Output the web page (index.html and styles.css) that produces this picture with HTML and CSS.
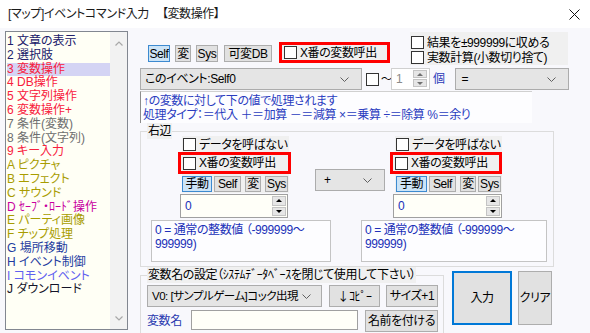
FILE: index.html
```html
<!DOCTYPE html>
<html lang="ja">
<head>
    <meta charset="UTF-8">
    <meta name="viewport" content="width=device-width, initial-scale=1.0">
    <title>[マップ]イベントコマンド入力 【変数操作】</title>
    <link rel="stylesheet" href="styles.css">
</head>
<body>
    <div class="titlebar">
        <span class="title">[マップ]イベントコマンド入力</span>
        <span class="title-sub">【変数操作】</span>
        <span class="close">
            <svg width="11" height="11" viewBox="0 0 11 11"><path d="M0.5 0.5L10.5 10.5M10.5 0.5L0.5 10.5" stroke="#111" stroke-width="1"/></svg>
        </span>
    </div>
    <div class="dialog">
        <div class="cmd-list">
            <ul class="cmd-items">
                <li class="c-navy">1 文章の表示</li>
                <li class="c-navy">2 選択肢</li>
                <li class="c-red current">3 変数操作</li>
                <li class="c-red">4 DB操作</li>
                <li class="c-red">5 文字列操作</li>
                <li class="c-red">6 変数操作+</li>
                <li class="c-gray">7 条件(変数)</li>
                <li class="c-gray">8 条件(文字列)</li>
                <li class="c-red">9 キー入力</li>
                <li class="c-olive">A ピクチャ</li>
                <li class="c-olive">B エフェクト</li>
                <li class="c-olive">C サウンド</li>
                <li class="c-magenta">D ｾｰﾌﾞ・ﾛｰﾄﾞ操作</li>
                <li class="c-olive">E パーティ画像</li>
                <li class="c-olive">F チップ処理</li>
                <li class="c-blue">G 場所移動</li>
                <li class="c-blue">H イベント制御</li>
                <li class="c-violet">I コモンイベント</li>
                <li class="c-dark">J ダウンロード</li>
            </ul>
            <div class="scrollbar">
                <svg width="8" height="5" viewBox="0 0 8 5"><path d="M0.5 4.5L4 1L7.5 4.5" fill="none" stroke="#a8a8a8" stroke-width="1.2"/></svg>
                <svg width="8" height="5" viewBox="0 0 8 5"><path d="M0.5 0.5L4 4L7.5 0.5" fill="none" stroke="#a8a8a8" stroke-width="1.2"/></svg>
            </div>
        </div>

        <div class="main">
            <div class="row-top">
                <div class="tool-buttons">
                    <button class="btn sel w-self">Self</button>
                    <button class="btn w-hen">変</button>
                    <button class="btn w-sys">Sys</button>
                    <button class="btn w-db">可変DB</button>
                </div>
                <label class="red-box top-red"><span class="check"></span>X番の変数呼出</label>
                <div class="opt-panel">
                    <label class="opt"><span class="check"></span>結果を±999999に収める</label>
                    <label class="opt"><span class="check"></span>実数計算(小数切り捨て)</label>
                </div>
            </div>

            <div class="row-target">
                <div class="combo target-combo">
                    <span>このイベント:Self0</span>
                    <svg width="9" height="5" viewBox="0 0 9 5"><path d="M0.5 0.5L4.5 4.5L8.5 0.5" fill="none" stroke="#606060"/></svg>
                </div>
                <span class="check range-check"></span>
                <span class="tilde">～</span>
                <div class="spin spin-off">
                    <span class="spin-val">1</span>
                    <div class="spin-btns"><span class="up"></span><span class="down"></span></div>
                </div>
                <span class="unit">個</span>
                <div class="combo op-combo">
                    <span>=</span>
                    <svg width="9" height="5" viewBox="0 0 9 5"><path d="M0.5 0.5L4.5 4.5L8.5 0.5" fill="none" stroke="#606060"/></svg>
                </div>
            </div>

            <div class="info">↑の変数に対して下の値で処理されます<br>処理タイプ：＝代入 ＋＝加算 －＝減算 ×＝乗算 ÷＝除算 %＝余り</div>

            <fieldset class="group rhs">
                <legend>右辺</legend>
                <div class="operands">
                    <div class="operand opd-left">
                        <div class="opd-panel">
                            <label class="opd-check"><span class="check"></span>データを呼ばない</label>
                            <label class="red-box opd-red"><span class="check"></span>X番の変数呼出</label>
                            <div class="opd-buttons">
                                <button class="btn sel w-manual">手動</button>
                                <button class="btn w-oself">Self</button>
                                <button class="btn w-ohen">変</button>
                                <button class="btn w-osys">Sys</button>
                            </div>
                        </div>
                        <div class="spin opd-spin">
                            <span class="spin-val">0</span>
                            <div class="spin-btns"><span class="up"></span><span class="down"></span></div>
                        </div>
                    </div>

                    <div class="combo calc-combo">
                        <span>+</span>
                        <svg width="9" height="5" viewBox="0 0 9 5"><path d="M0.5 0.5L4.5 4.5L8.5 0.5" fill="none" stroke="#606060"/></svg>
                    </div>

                    <div class="operand opd-right">
                        <div class="opd-panel">
                            <label class="opd-check"><span class="check"></span>データを呼ばない</label>
                            <label class="red-box opd-red"><span class="check"></span>X番の変数呼出</label>
                            <div class="opd-buttons">
                                <button class="btn sel w-manual">手動</button>
                                <button class="btn w-oself">Self</button>
                                <button class="btn w-ohen">変</button>
                                <button class="btn w-osys">Sys</button>
                            </div>
                        </div>
                        <div class="spin opd-spin">
                            <span class="spin-val">0</span>
                            <div class="spin-btns"><span class="up"></span><span class="down"></span></div>
                        </div>
                    </div>
                </div>
                <div class="descs">
                    <div class="desc desc-left">0 = 通常の整数値 （-999999～<br>999999)</div>
                    <div class="desc desc-right">0 = 通常の整数値 （-999999～<br>999999)</div>
                </div>
            </fieldset>

            <div class="row-bottom">
                <fieldset class="group names">
                    <legend>変数名の設定<span class="legend-note">（ｼｽﾃﾑﾃﾞｰﾀﾍﾞｰｽを閉じて使用して下さい）</span></legend>
                    <div class="name-row">
                        <div class="combo name-combo">
                            <span class="name-value">V0: [サンプルゲーム]コック出現</span>
                            <svg width="9" height="5" viewBox="0 0 9 5"><path d="M0.5 0.5L4.5 4.5L8.5 0.5" fill="none" stroke="#606060"/></svg>
                        </div>
                        <button class="btn btn-copy"><span class="cjk">↓</span>ｺﾋﾟｰ</button>
                        <button class="btn btn-size">サイズ+1</button>
                    </div>
                    <div class="name-row">
                        <span class="name-label">変数名</span>
                        <input class="name-input" type="text">
                        <button class="btn btn-name">名前を付ける</button>
                    </div>
                </fieldset>
                <button class="btn btn-enter">入力</button>
                <button class="btn btn-clear">クリア</button>
            </div>
        </div>
    </div>
</body>
</html>
```

FILE: styles.css
```css
* {
    box-sizing: border-box;
}
body {
    margin: 0;
    width: 590px;
    height: 333px;
    overflow: hidden;
    background-color: #f8f8fc;
    font-family: "Liberation Sans", "Noto Sans CJK JP", sans-serif;
    font-size: 12px;
    line-height: 14px;
    letter-spacing: -0.4px;
    color: #000;
    font-feature-settings: "palt";
}
label {
    white-space: nowrap;
}
.cjk {
    font-family: "Noto Sans CJK JP", sans-serif;
}

/* title bar */
.titlebar {
    height: 28px;
    background-color: #fff;
    display: flex;
    align-items: center;
    padding-left: 8px;
    color: #1a1a1a;
}
.title-sub {
    margin-left: 13px;
}
.close {
    margin-left: auto;
    margin-right: 10px;
    display: flex;
}

.dialog {
    display: flex;
    align-items: flex-start;
    padding: 3px 0 0 5px;
}

/* command list */
.cmd-list {
    width: 123px;
    height: 299px;
    border: 1px solid #828790;
    background-color: #fffff5;
    display: flex;
}
.cmd-items {
    list-style: none;
    margin: 0;
    padding: 3px 0 0 1px;
    flex: 1;
    letter-spacing: 0;
}
.cmd-items li {
    height: 13.8px;
    line-height: 13.8px;
    white-space: nowrap;
}
.cmd-items li.current {
    background-color: #d4d4f4;
}
.c-navy { color: #20206a; }
.c-red { color: #f8203c; }
.c-gray { color: #6e6e6e; }
.c-olive { color: #a89c00; }
.c-magenta { color: #c800a0; }
.c-blue { color: #1e3ca0; }
.c-violet { color: #6060f0; }
.c-dark { color: #141428; }

.scrollbar {
    width: 17px;
    background-color: #f2f2f2;
    display: flex;
    flex-direction: column;
    justify-content: space-between;
    align-items: center;
    padding: 9px 0 8px;
}

/* main panel */
.main {
    margin: 1px 0 0 12px;
    width: 450px;
}

.btn {
    font: inherit;
    letter-spacing: inherit;
    line-height: 12px;
    background-color: #e1e1e1;
    border: 1px solid #adadad;
    padding: 0;
    color: #000;
    white-space: nowrap;
}
.btn.sel {
    background-color: #cce4f7;
    border-color: #3d8ad0;
}

.check {
    width: 13px;
    height: 13px;
    border: 1px solid #333;
    background-color: #fff;
    flex: none;
    margin-right: 3px;
}

.red-box {
    border: 3px solid #ff0000;
    background-color: #f0f0f0;
    display: flex;
    align-items: center;
    padding-left: 2px;
}

.row-top {
    display: flex;
    height: 34px;
}
.tool-buttons {
    display: flex;
    gap: 5px;
    margin: 13px 0 0 8px;
    height: 17px;
}
.w-self { width: 22px; }
.w-hen { width: 16px; }
.w-sys { width: 22px; }
.w-db { width: 48px; margin-left: 1px; }

.top-red {
    width: 111px;
    height: 21px;
    margin: 10px 0 0 7px;
}

.opt-panel {
    margin-left: 20px;
    width: 158px;
    height: 33px;
    background-color: #f0f0f0;
    padding: 3px 0 0 1px;
}
.opt {
    display: flex;
    align-items: center;
    height: 15px;
}

/* target row */
.row-target {
    display: flex;
    align-items: center;
    height: 22px;
    margin-top: 2px;
}
.combo {
    display: flex;
    align-items: center;
    justify-content: space-between;
    background-color: #e5e5e5;
    border: 1px solid #acacac;
    padding: 0 12px 0 4px;
    height: 22px;
    white-space: nowrap;
}
.combo svg {
    flex: none;
}
.target-combo {
    width: 222px;
}
.range-check {
    margin-left: 4px;
}
.range-check.check {
    margin-right: 2px;
}
.tilde {
    width: 10px;
    font-size: 11px;
    flex: none;
}
.spin {
    display: flex;
    border: 1px solid #a0a0a0;
    background-color: #fffff8;
    flex: none;
}
.spin-val {
    flex: 1;
    padding-left: 4px;
    display: flex;
    align-items: center;
    color: #2030b8;
}
.spin-btns {
    width: 16px;
    display: flex;
    flex-direction: column;
    gap: 1px;
    padding: 1px;
}
.spin-btns span {
    flex: 1;
    background-color: #e6e6e6;
    border: 1px solid #c4c4c4;
    display: flex;
    align-items: center;
    justify-content: center;
}
.spin-btns .up::before {
    content: "";
    border-left: 3px solid transparent;
    border-right: 3px solid transparent;
    border-bottom: 3px solid #000;
}
.spin-btns .down::before {
    content: "";
    border-left: 3px solid transparent;
    border-right: 3px solid transparent;
    border-top: 3px solid #000;
}
.spin-off {
    width: 39px;
    height: 22px;
    border-color: #d0d0d0;
    background-color: #fff;
}
.spin-off .spin-val {
    color: #8a8a8a;
}
.spin-off .spin-btns {
    width: 17px;
    padding: 1px 2px 2px 1px;
}
.spin-off .spin-btns span::before {
    border-top-color: #707070;
    border-bottom-color: #707070;
}
.unit {
    margin-left: 3px;
    color: #2838b8;
}
.op-combo {
    margin-left: 10px;
    width: 114px;
    padding-left: 6px;
}

/* info text */
.info {
    width: 392px;
    height: 32px;
    margin-top: 1px;
    border-top: 1px solid #d0d0d0;
    border-left: 1px solid #8c8c8c;
    background-color: #fdfdff;
    color: #2a3cc0;
    padding: 2px 0 0 2px;
    white-space: nowrap;
}

/* group boxes */
fieldset.group {
    margin: 0;
    padding: 0;
    border: 1px solid #dcdcdc;
    min-width: 0;
}
fieldset.group legend {
    padding: 0 1px;
    background-color: #f0f0f0;
    height: 16px;
    line-height: 16px;
    white-space: nowrap;
}
.rhs {
    margin: 1px 0 0 6px;
    width: 414px;
    height: 144px;
}
.rhs legend {
    margin-left: 6px;
}

.operands {
    display: flex;
    align-items: flex-start;
    margin-top: -3px;
    padding-left: 37px;
}
.operand {
    width: 113px;
    flex: none;
}
.opd-panel {
    margin: 0 2px 0 4px;
    background-color: #f0f0f0;
    padding-bottom: 1px;
}
.opd-check {
    display: flex;
    align-items: center;
    height: 16px;
    padding: 1px 0 0 1px;
}
.opd-red {
    height: 22px;
    margin: 0 -2px 0 -4px;
}
.opd-buttons {
    display: flex;
    height: 16px;
    margin-top: 2px;
}
.w-manual { width: 30px; }
.w-oself { width: 27px; margin-left: 2px; }
.w-ohen { width: 16px; margin-left: 4px; }
.w-osys { width: 23px; margin-left: 4px; }
.opd-spin {
    height: 24px;
    margin: 1px 0 0 2px;
    width: 108px;
}

.calc-combo {
    width: 70px;
    margin: 33px 0 0 24px;
    padding-left: 8px;
    flex: none;
}

.opd-right {
    width: 112px;
    margin-left: 5px;
}
.opd-right .opd-panel {
    margin: 0 0 0 5px;
}
.opd-right .opd-red {
    margin: 0 0 0 -5px;
}
.opd-right .opd-buttons {
    margin-left: 1px;
}
.opd-right .w-manual { width: 31px; }
.opd-right .w-ohen { margin-left: 4px; }
.opd-right .w-osys { margin-left: 2px; }
.opd-right .opd-spin {
    margin-left: 3px;
    width: 109px;
}

.descs {
    display: flex;
    margin-top: 2px;
}
.desc {
    height: 42px;
    border: 1px solid #c4c4c4;
    background-color: #fdfdff;
    color: #2030b8;
    padding: 2px 0 0 3px;
    white-space: nowrap;
    flex: none;
}
.desc-left {
    margin-left: 10px;
    width: 180px;
}
.desc-right {
    margin-left: 30px;
    width: 186px;
}

/* bottom area */
.row-bottom {
    display: flex;
    align-items: flex-start;
}
.names {
    margin-left: 1px;
    width: 304px;
    height: 70px;
    flex: none;
}
.names legend {
    margin-left: 6px;
    height: 15px;
    line-height: 15px;
    padding: 0;
}
.name-row {
    display: flex;
    align-items: center;
    padding-left: 6px;
    height: 22px;
    margin-top: 2px;
}
.name-row + .name-row {
    margin-top: 3px;
}
.name-combo {
    width: 175px;
    flex: none;
    padding-right: 10px;
}
.name-value {
    font-size: 11.5px;
    letter-spacing: -0.5px;
}
.btn-copy {
    width: 51px;
    height: 22px;
    margin-left: 7px;
    flex: none;
}
.btn-size {
    width: 52px;
    height: 22px;
    margin-left: 6px;
    flex: none;
}
.name-label {
    width: 44px;
    color: #2838b0;
    flex: none;
}
.name-input {
    width: 167px;
    height: 20px;
    border: 1px solid #a0a0a0;
    background-color: #fffff8;
    padding: 0;
    margin: 0 0 2px;
    flex: none;
}
.btn-name {
    width: 73px;
    height: 22px;
    margin-left: 7px;
    flex: none;
}
.btn-enter {
    width: 60px;
    height: 54px;
    margin: 4px 0 0 8px;
    border: 2px solid #0078d7;
    flex: none;
}
.btn-clear {
    width: 34px;
    height: 54px;
    margin: 4px 0 0 6px;
    flex: none;
}
```
